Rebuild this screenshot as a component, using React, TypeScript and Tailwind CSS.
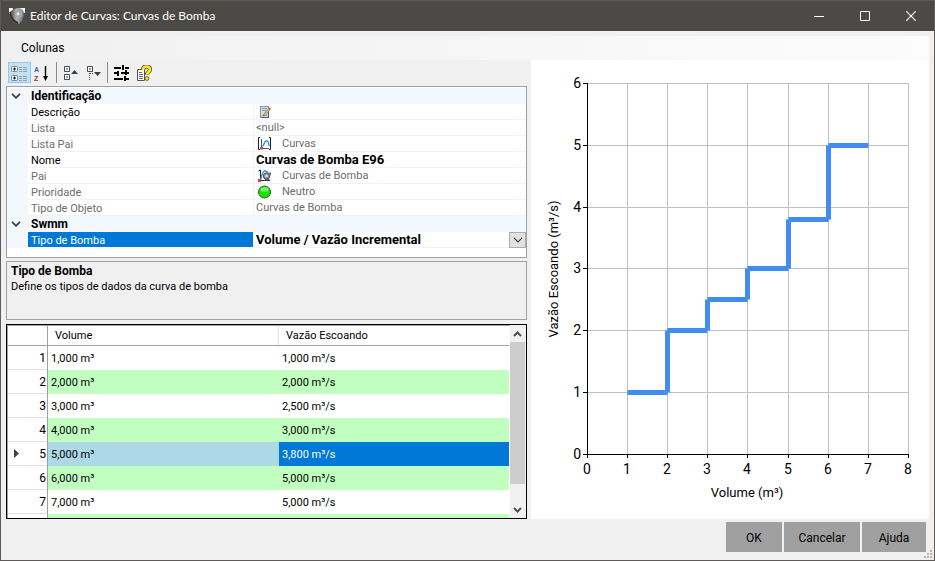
import React, { useState } from 'react';
import clsx from 'clsx';

type Property = {
  id: string;
  label: string;
  value?: string;
  icon?: React.ReactNode;
  readOnly?: boolean;
};

const NoteIcon = () => (
  <svg viewBox="0 0 14 14" className="h-3.5 w-3.5">
    <rect x="2.5" y="1.5" width="8" height="11" fill="#cfdef2" stroke="#8a93a8" />
    <path d="M10.500 12.500v-7M3 12.500h8" stroke="#4d5a78" fill="none" />
    <path d="M2 3h1M2 5h1M2 7h1M2 9h1M2 11h1" stroke="#b88a3a" strokeWidth="1.4" />
    <path d="M4 3.500h5M4 5.500h4M4 10.500h5" stroke="#7c9cc8" />
    <path d="M5.500 9.500l5-6 1.500 1.300-5 5.700-2 .6z" fill="#f0bf4c" stroke="#6a5a34" strokeWidth=".6" />
    <path d="M10.500 3.500l1-1 1.300 1.200-.8 1.100z" fill="#c4473a" />
  </svg>
);

const CurveIcon = () => (
  <svg viewBox="0 0 14 14" className="h-3.5 w-3.5">
    <path d="M2 .5H.5v12H2M11 .5h1.500v12H11" stroke="#222" fill="none" />
    <path d="M3.500 2v8M5 11.500h6" stroke="#555" fill="none" />
    <path d="M4.500 9.500c1.500-1 1.500-5 3.500-5.500S10.500 5 11 9" stroke="#1a9be0" strokeWidth="1.400" fill="none" />
    <rect x="2" y="10" width="3" height="2.500" fill="#f0352c" />
  </svg>
);

const PumpIcon = () => (
  <svg viewBox="0 0 14 14" className="h-3.5 w-3.5">
    <path d="M.5 2l2-1v10M1 11.500h11" stroke="#222" fill="none" />
    <path d="M3 10c1-6 2-8 4-8 1.500 0 2 .5 2.500 1" stroke="#3a8fd6" strokeWidth="1.400" fill="none" />
    <circle cx="8.500" cy="7" r="3.200" fill="#8d969e" stroke="#4a5258" />
    <path d="M8 3.500h5v3h-2z" fill="#6d767e" />
    <circle cx="8.500" cy="7" r="1.200" fill="#e4e8ea" />
    <path d="M6 11.500l1.500-2h3l2 2z" fill="#59626a" />
    <rect x="0" y="10" width="3" height="3" fill="#f0352c" />
  </svg>
);

const NeutralIcon = () => (
  <svg viewBox="0 0 14 14" className="h-3.5 w-3.5">
    <circle cx="6.500" cy="7" r="6" fill="#19e600" stroke="#2e5e26" />
    <ellipse cx="6.500" cy="4.500" rx="4" ry="2.200" fill="#7dfc6c" />
  </svg>
);

const identification: Property[] = [
  { id: 'descricao', label: 'Descrição', icon: <NoteIcon /> },
  { id: 'lista', label: 'Lista', value: '<null>', readOnly: true },
  { id: 'lista-pai', label: 'Lista Pai', value: 'Curvas', icon: <CurveIcon />, readOnly: true },
  { id: 'nome', label: 'Nome', value: 'Curvas de Bomba E96' },
  { id: 'pai', label: 'Pai', value: 'Curvas de Bomba', icon: <PumpIcon />, readOnly: true },
  { id: 'prioridade', label: 'Prioridade', value: 'Neutro', icon: <NeutralIcon />, readOnly: true },
  { id: 'tipo-objeto', label: 'Tipo de Objeto', value: 'Curvas de Bomba', readOnly: true },
];

const curve = [
  { volume: '1,000 m³', flow: '1,000 m³/s' },
  { volume: '2,000 m³', flow: '2,000 m³/s' },
  { volume: '3,000 m³', flow: '2,500 m³/s' },
  { volume: '4,000 m³', flow: '3,000 m³/s' },
  { volume: '5,000 m³', flow: '3,800 m³/s' },
  { volume: '6,000 m³', flow: '5,000 m³/s' },
  { volume: '7,000 m³', flow: '5,000 m³/s' },
];

const TitleBar = () => (
  <header className="flex h-[30px] shrink-0 items-center bg-[#4b4a47] pl-2 text-white">
    <svg viewBox="0 0 16 16" className="h-4 w-4">
      <defs>
        <linearGradient id="shield" x1="0" y1="0" x2="1" y2="0">
          <stop offset="0" stopColor="#3c3c3c" />
          <stop offset=".45" stopColor="#b4b4b4" />
          <stop offset="1" stopColor="#6a6a6a" />
        </linearGradient>
      </defs>
      <path d="M0 0h4v4L1 6H0zM9 0h7v5h-2z" fill="#fff" />
      <path d="M1 4Q5 0 10 0q4 1 5 5 0 6-5 11Q3 12 1 4z" fill="url(#shield)" />
      <path d="M1 4c0 4 3 9 8 11" stroke="#333" strokeWidth="1.600" fill="none" />
      <ellipse cx="10" cy="6" rx="3.500" ry="4" fill="#a8a8a8" />
      <circle cx="9" cy="6" r="1.400" fill="#ececec" />
    </svg>
    <h1 className="ml-[5px] flex-1 font-[Lato,sans-serif] text-xs">Editor de Curvas: Curvas de Bomba</h1>
    <button aria-label="Minimizar" className="flex h-full w-[46px] items-center justify-center">
      <svg viewBox="0 0 10 11" className="h-[11px] w-2.5"><path d="M0 5.500h10" stroke="currentColor" shapeRendering="crispEdges" /></svg>
    </button>
    <button aria-label="Maximizar" className="flex h-full w-[46px] items-center justify-center">
      <svg viewBox="0 0 10 10" className="h-2.5 w-2.5"><path d="M.5 .5h9v9h-9z" stroke="currentColor" fill="none" /></svg>
    </button>
    <button aria-label="Fechar" className="flex h-full w-[46px] items-center justify-center">
      <svg viewBox="0 0 10 10" className="h-2.5 w-2.5"><path d="M0 0l10 10M10 0L0 10" stroke="currentColor" strokeWidth="1.200" /></svg>
    </button>
  </header>
);

const ToolButton = ({ label, active, children }: { label: string; active?: boolean; children: React.ReactNode }) => (
  <button
    aria-label={label}
    className={clsx(
      'flex h-[21px] w-[23px] items-start border pt-0.5 pl-0.5',
      active ? 'border-[#90c8f6] bg-[#c4e0f5]' : 'border-transparent'
    )}
  >
    <svg viewBox="0 0 16 16" className="h-4 w-4 shrink-0">{children}</svg>
  </button>
);

const Separator = () => <div className="mx-0.5 h-[21px] w-px bg-[#8c8c8c]" />;

const Toolbar = () => (
  <div className="flex h-[26px] shrink-0 items-start pt-0.5 pl-0.5">
    <ToolButton label="Por categoria" active>
      <rect x=".5" y="1.500" width="6" height="5" rx="1" fill="#fff" stroke="#77879c" />
      <rect x=".5" y="10.500" width="6" height="5" rx="1" fill="#fff" stroke="#77879c" />
      <path d="M2 4h3M3.500 2.500v3M2 13h3M3.500 11.500v3" stroke="#111" />
      <path d="M8 2.500h3M8 4.500h3M8 6.500h3M8 11.500h3M8 13.500h3M8 15.500h3M12 2.500h4M12 4.500h4M12 6.500h4M12 11.500h4M12 13.500h4M12 15.500h4" stroke="#8da0b6" />
    </ToolButton>
    <ToolButton label="Em ordem alfabética">
      <text x="0" y="7" fontSize="7" fontWeight="bold" fontFamily="Liberation Sans, sans-serif" fill="#2f6bab">A</text>
      <text x="0" y="16" fontSize="7" fontWeight="bold" fontFamily="Liberation Sans, sans-serif" fill="#9c2f2f">Z</text>
      <path d="M11.500 1v12" stroke="#000" strokeWidth="1.400" />
      <path d="M9 11h5l-2.500 5z" fill="#000" />
    </ToolButton>
    <Separator />
    <ToolButton label="Recolher tudo">
      <path d="M2.500 1.500h5v5h-5zM2.500 9.500h5v5h-5z" fill="#fff" stroke="#44494f" />
      <path d="M4 4h2M4 12h2" stroke="#333" />
      <path d="M9 9h7l-3.500-4z" fill="#3b3f48" />
    </ToolButton>
    <ToolButton label="Expandir tudo">
      <path d="M2.500 1.500h5v5h-5z" fill="#fff" stroke="#44494f" />
      <path d="M4 4h2" stroke="#333" />
      <path d="M4.500 8v7" stroke="#44494f" strokeDasharray="1 1" />
      <path d="M5 8.500h4" stroke="#44494f" strokeDasharray="1 1" />
      <path d="M9 7h7l-3.500 4z" fill="#3b3f48" />
    </ToolButton>
    <Separator />
    <ToolButton label="Opções">
      <g transform="translate(1 0)" stroke="#000" strokeWidth="2" shapeRendering="crispEdges">
        <path d="M0 3h7M11 3h5M0 8h3M7 8h8M0 14h9M12 14h4" />
        <path d="M9 0v5M4 6v5M11 11v5M12 5v5" />
      </g>
    </ToolButton>
    <ToolButton label="Ajuda da propriedade">
      <path d="M1.500 4.500h7v11h-7z" fill="#fff" stroke="#555" />
      <path d="M3 7.500h3M3 9.500h4M3 11.500h4M3 13.500h4" stroke="#666" />
      <path d="M7 5c0-2.500 1.500-3.500 3.700-3.500S14 3 14 4.700c0 2.300-3 2.500-3 5" stroke="#444" strokeWidth="4" fill="none" />
      <path d="M7 5c0-2.500 1.500-3.500 3.700-3.500S14 3 14 4.700c0 2.300-3 2.500-3 5" stroke="#ffee10" strokeWidth="2.600" fill="none" />
      <circle cx="11" cy="13.500" r="1.900" fill="#ffee10" stroke="#444" strokeWidth=".8" />
    </ToolButton>
  </div>
);

const Category = ({ name }: { name: string }) => (
  <div className="flex h-4 items-center bg-[#f4f7fc]">
    <button aria-label={name} className="w-[21px] pl-1">
      <svg viewBox="0 0 10 6" className="h-1.5 w-2.5"><path d="M1 .8l4 4 4-4" stroke="#404040" strokeWidth="1.800" fill="none" /></svg>
    </button>
    <h2 className="pl-[3px] text-xs leading-4 font-bold">{name}</h2>
  </div>
);

const PropertyRow = ({ id, label, value, icon, readOnly }: Property) => (
  <div className={clsx('flex h-4', readOnly ? 'text-[#6d6d6d]' : 'text-black')}>
    <div className="w-[21px] bg-[#f4f7fc]" />
    <label htmlFor={id} className="w-[226px] border-r border-b border-[#f0f3f9] pt-px pl-[3px] leading-4">{label}</label>
    <div className="flex min-w-0 flex-1 items-center border-b border-[#f0f3f9] pl-0.5">
      {icon && <span className="mr-2.5 ml-0.5 shrink-0">{icon}</span>}
      <input
        id={id}
        defaultValue={value}
        readOnly={readOnly}
        className={clsx('h-4 min-w-0 flex-1 bg-transparent outline-none', readOnly ? 'pt-0.5' : 'text-[13px] font-bold')}
      />
    </div>
  </div>
);

const PropertyGrid = () => (
  <section className="h-[172px] shrink-0 border border-[#a0a0a0] bg-white pt-px">
    <Category name="Identificação" />
    {identification.map((p) => (
      <PropertyRow key={p.id} {...p} />
    ))}
    <Category name="Swmm" />
    <div className="flex h-4">
      <div className="w-[21px] bg-[#f4f7fc]" />
      <label htmlFor="tipo-bomba" className="h-[15px] w-[225px] bg-[#0078d7] pt-px pl-[3px] leading-4 text-white">Tipo de Bomba</label>
      <div className="relative flex-1 border-b border-[#f0f3f9]">
        <select id="tipo-bomba" className="h-[15px] w-full appearance-none bg-white pl-[3px] text-[13px] leading-4 font-bold outline-none">
          <option>Volume / Vazão Incremental</option>
        </select>
        <span className="pointer-events-none absolute top-0 right-0 flex h-4 w-[17px] items-center justify-center border border-[#adadad] bg-[#e1e1e1]">
          <svg viewBox="0 0 10 6" className="h-1.5 w-2.5"><path d="M1 .8l4 4 4-4" stroke="#404040" strokeWidth="1.200" fill="none" /></svg>
        </span>
      </div>
    </div>
  </section>
);

const CurveTable = () => {
  const [selected, setSelected] = useState(4);

  return (
    <section className="flex min-h-0 flex-1 overflow-hidden border border-black bg-white">
      <div className="min-w-0 flex-1 overflow-hidden border-t border-l border-[#a0a0a0] pr-px">
        <table className="w-full table-fixed border-separate border-spacing-0 text-left">
          <colgroup>
            <col className="w-10" />
            <col className="w-[231px]" />
            <col />
          </colgroup>
          <thead>
            <tr className="h-5">
              <th className="border-r border-b border-[#a0a0a0]" />
              <th className="border-b border-[#a0a0a0] pt-0.5 pl-[7px] font-normal shadow-[inset_-1px_0_0_#e5e5e5]">Volume</th>
              <th className="border-b border-[#a0a0a0] pt-0.5 pl-[7px] font-normal">Vazão Escoando</th>
            </tr>
          </thead>
          <tbody>
            {curve.map((row, i) => (
              <tr key={i} onClick={() => setSelected(i)} className={clsx('h-6', i % 2 === 1 && 'bg-[#c0ffc0]')}>
                <th className="border-r border-[#a0a0a0] bg-white p-0 font-normal">
                  <div className="flex h-6 items-center border-b border-[#e0e0e0] pr-px pl-1.5">
                    {i === selected && (
                      <svg viewBox="0 0 5 9" className="h-[9px] w-[5px]"><path d="M0 0l5 4.500L0 9z" fill="#404040" /></svg>
                    )}
                    <span className="flex-1 text-right text-xs">{i + 1}</span>
                  </div>
                </th>
                <td className={clsx('pt-[3px] pl-[3px]', i === selected && 'bg-[#add8e6]')}>{row.volume}</td>
                <td className={clsx('pt-[3px] pl-[3px]', i === selected && 'bg-[#0078d7] text-white')}>{row.flow}</td>
              </tr>
            ))}
            <tr className="h-6 bg-[#c0ffc0]">
              <th className="border-r border-[#a0a0a0] bg-white" />
              <td />
              <td />
            </tr>
          </tbody>
        </table>
      </div>
      <div className="flex w-4 shrink-0 flex-col bg-[#f0f0f0]">
        <button aria-label="Rolar para cima" className="flex h-[17px] items-center pl-[3px]">
          <svg viewBox="0 0 9 6" className="h-1.5 w-[9px]"><path d="M1 5l3.500-3.500L8 5" stroke="#505050" strokeWidth="2" fill="none" /></svg>
        </button>
        <div className="flex-1 pr-px">
          <div className="h-[89%] bg-[#cdcdcd]" />
        </div>
        <button aria-label="Rolar para baixo" className="flex h-[17px] items-center pl-[3px]">
          <svg viewBox="0 0 9 6" className="h-1.5 w-[9px]"><path d="M1 1l3.500 3.500L8 1" stroke="#505050" strokeWidth="2" fill="none" /></svg>
        </button>
      </div>
    </section>
  );
};

const xTicks = [56, 96, 136, 176, 216, 257, 297, 337, 377];
const yTicks = [394, 332, 270, 208, 147, 85, 23];

const Chart = () => (
  <section className="min-h-0 bg-white">
    <svg viewBox="0 0 398 459" className="h-full w-full" fontFamily="Roboto, sans-serif" fontSize="14">
      <g stroke="#c0c0c0" shapeRendering="crispEdges">
        {xTicks.map((x) => (
          <path key={x} d={`M${x + 0.5} 23v371`} />
        ))}
        {yTicks.map((y) => (
          <path key={y} d={`M56 ${y + 0.5}h322`} />
        ))}
      </g>
      <g stroke="#000" shapeRendering="crispEdges">
        <path d="M56.500 23v375M52 394.500h326" />
        {xTicks.map((x) => (
          <path key={x} d={`M${x + 0.5} 394v4`} />
        ))}
        {yTicks.map((y) => (
          <path key={y} d={`M52 ${y + 0.5}h4`} />
        ))}
      </g>
      <path
        d="M96.500 332.500h40M136.500 332.500v-62M136.500 270.500h40M176.500 270.500v-31M176.500 239.500h40M216.500 239.500v-31M216.500 208.500h41M257.500 208.500v-49M257.500 159.500h40M297.500 159.500v-74M297.500 85.500h40"
        stroke="#418cf0"
        strokeWidth="5"
        fill="none"
      />
      {xTicks.map((x, i) => (
        <text key={x} x={x} y="414" textAnchor="middle">{i}</text>
      ))}
      {yTicks.map((y, i) => (
        <text key={y} x="50" y={y + 5} textAnchor="end">{i}</text>
      ))}
      <text x="216" y="437" fontSize="13" textAnchor="middle">Volume (m³)</text>
      <text transform="translate(27 209) rotate(-90)" fontSize="13" textAnchor="middle">Vazão Escoando (m³/s)</text>
    </svg>
  </section>
);

const App: React.FC = () => {
  return (
    <div className="flex h-screen flex-col border border-[#5c5b59] bg-[#f0f0f0] font-[Roboto,sans-serif] text-[11px] text-black">
      <TitleBar />

      {/* Menu */}
      <nav className="mx-[5px] mt-[5px] flex h-6 shrink-0 items-center bg-linear-to-r from-[#f0f0f0] to-[#fcfcfc]">
        <button className="px-[15px] text-xs">Colunas</button>
      </nav>

      <main className="mx-[5px] grid min-h-0 flex-1 grid-cols-[521fr_398fr] grid-rows-1 gap-1">
        <div className="flex min-h-0 min-w-0 flex-col">
          <Toolbar />
          <PropertyGrid />
          <section className="mt-[3px] mb-1 h-[59px] shrink-0 border border-[#a0a0a0] px-1 pt-px">
            <h2 className="text-xs leading-4 font-bold">Tipo de Bomba</h2>
            <p className="leading-4">Define os tipos de dados da curva de bomba</p>
          </section>
          <CurveTable />
        </div>
        <Chart />
      </main>

      <footer className="relative flex shrink-0 justify-end gap-0.5 pt-[3px] pr-2 pb-2 text-xs">
        <button className="h-[30px] w-14 bg-[#a0a0a0] pt-0.5">OK</button>
        <button className="h-[30px] w-[76px] bg-[#a0a0a0] pt-0.5">Cancelar</button>
        <button className="h-[30px] w-16 bg-[#a0a0a0] pt-0.5">Ajuda</button>
        <svg viewBox="0 0 8 8" className="absolute right-0.5 bottom-0.5 h-2 w-2">
          <path d="M6 0h2v2H6zM3 3h2v2H3zM6 3h2v2H6zM0 6h2v2H0zM3 6h2v2H3zM6 6h2v2H6z" fill="#b8b8b8" />
        </svg>
      </footer>
    </div>
  );
};

export default App;
